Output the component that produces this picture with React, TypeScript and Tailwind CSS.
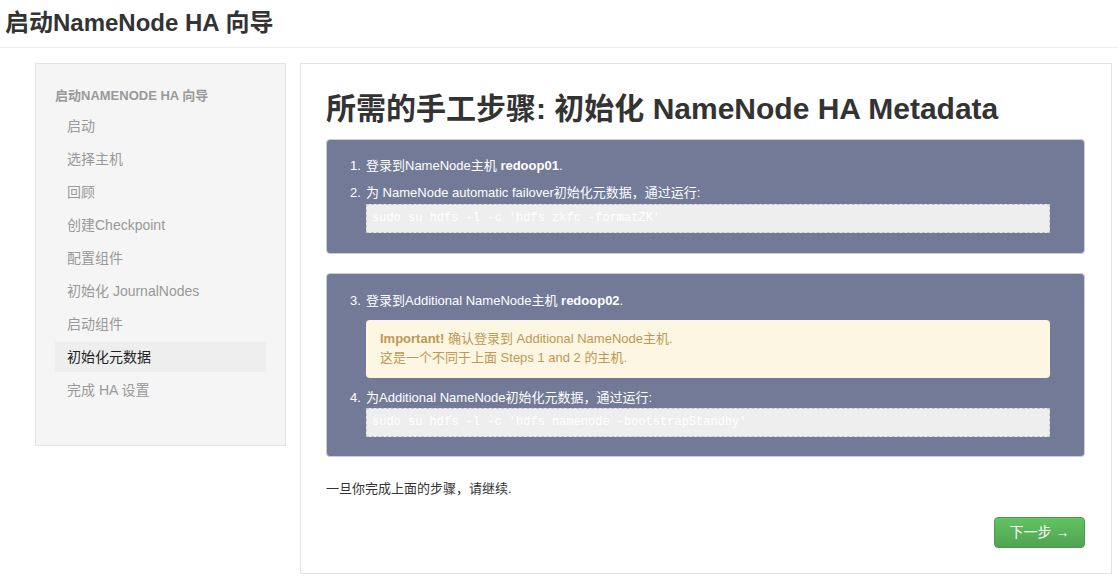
const SIDEBAR_ITEMS = [
  '启动',
  '选择主机',
  '回顾',
  '创建Checkpoint',
  '配置组件',
  '初始化 JournalNodes',
  '启动组件',
  '初始化元数据',
  '完成 HA 设置',
];

const ACTIVE = '初始化元数据';

const Step = ({ n, children }: { n: number; children: React.ReactNode }) => (
  <div className="flex h-[20px] items-center">
    <span className="w-[16px] shrink-0">{n}.</span>
    <span>{children}</span>
  </div>
);

const Code = ({ children }: { children: React.ReactNode }) => (
  <pre className="ml-[16px] h-[29px] border border-dashed border-[#c8c8c8] bg-[#eeeeee] px-[5px] pt-[6px] text-[12px] leading-[15px] text-white [font-family:'Liberation_Mono',monospace]">
    {children}
  </pre>
);

export default function App() {
  return (
    <div className="min-h-[583px] bg-white text-[#333] [font-family:'Liberation_Sans','Noto_Sans_CJK_SC',sans-serif]">
      {/* header */}
      <div className="h-[48px] border-b border-[#eeeeee] pl-[5px]">
        <h1 className="pt-[7px] text-[24px] font-bold leading-[32px] text-[#333]">启动NameNode HA 向导</h1>
      </div>

      <div className="flex items-start gap-[14px] pl-[35px] pr-[6px] pt-[15px]">
        {/* sidebar */}
        <div className="h-[383px] w-[251px] shrink-0 border border-[#e3e3e3] bg-[#f5f5f5] px-[19px] pt-[22px]">
          <div className="mb-[5px] text-[13px] font-bold leading-[20px] text-[#999]">启动NAMENODE HA 向导</div>
          {SIDEBAR_ITEMS.map((item) => (
            <div
              key={item}
              className={`h-[30px] mt-[3px] pl-[12px] text-[14px] leading-[30px] ${
                item === ACTIVE ? 'bg-[#eeeeee] text-[#222]' : 'text-[#999]'
              }`}
            >
              {item}
            </div>
          ))}
        </div>

        {/* main */}
        <div className="h-[511px] flex-1 border border-[#e3e3e3] pl-[25px] pr-[26px] pt-[25px]">
          <h2 className="text-[30px] font-bold leading-[40px] text-[#333]">
            所需的手工步骤: 初始化 NameNode HA Metadata
          </h2>

          <div className="mt-[10px] h-[115px] rounded-[4px] border border-[#c9cdd6] bg-[#727a98] pl-[23px] pr-[34px] pt-[16px] text-[13px] text-white">
            <Step n={1}>
              登录到NameNode主机 <b>redoop01</b>.
            </Step>
            <div className="mt-[7px]">
              <Step n={2}>为 NameNode automatic failover初始化元数据，通过运行:</Step>
            </div>
            <div className="mt-[1px]">
              <Code>sudo su hdfs -l -c 'hdfs zkfc -formatZK'</Code>
            </div>
          </div>

          <div className="mt-[19px] h-[184px] rounded-[4px] border border-[#c9cdd6] bg-[#727a98] pl-[23px] pr-[34px] pt-[17px] text-[13px] text-white">
            <Step n={3}>
              登录到Additional NameNode主机 <b>redoop02</b>.
            </Step>
            <div className="ml-[16px] mt-[9px] h-[58px] rounded-[4px] bg-[#fcf6e2] px-[14px] pt-[9px] text-[13px] leading-[19px] text-[#c09853]">
              <div>
                <b>Important!</b> 确认登录到 Additional NameNode主机.
              </div>
              <div>这是一个不同于上面 Steps 1 and 2 的主机.</div>
            </div>
            <div className="mt-[10px]">
              <Step n={4}>为Additional NameNode初始化元数据，通过运行:</Step>
            </div>
            <Code>sudo su hdfs -l -c 'hdfs namenode -bootstrapStandby'</Code>
          </div>

          <p className="mt-[22px] text-[13px] leading-[20px] text-[#333]">一旦你完成上面的步骤，请继续.</p>

          <div className="mt-[18px] flex justify-end">
            <button className="h-[31px] w-[91px] rounded-[4px] border border-[#4c9a4c] bg-gradient-to-b from-[#62c462] to-[#51a351] text-[14px] text-white">
              下一步 →
            </button>
          </div>
        </div>
      </div>
    </div>
  );
}
